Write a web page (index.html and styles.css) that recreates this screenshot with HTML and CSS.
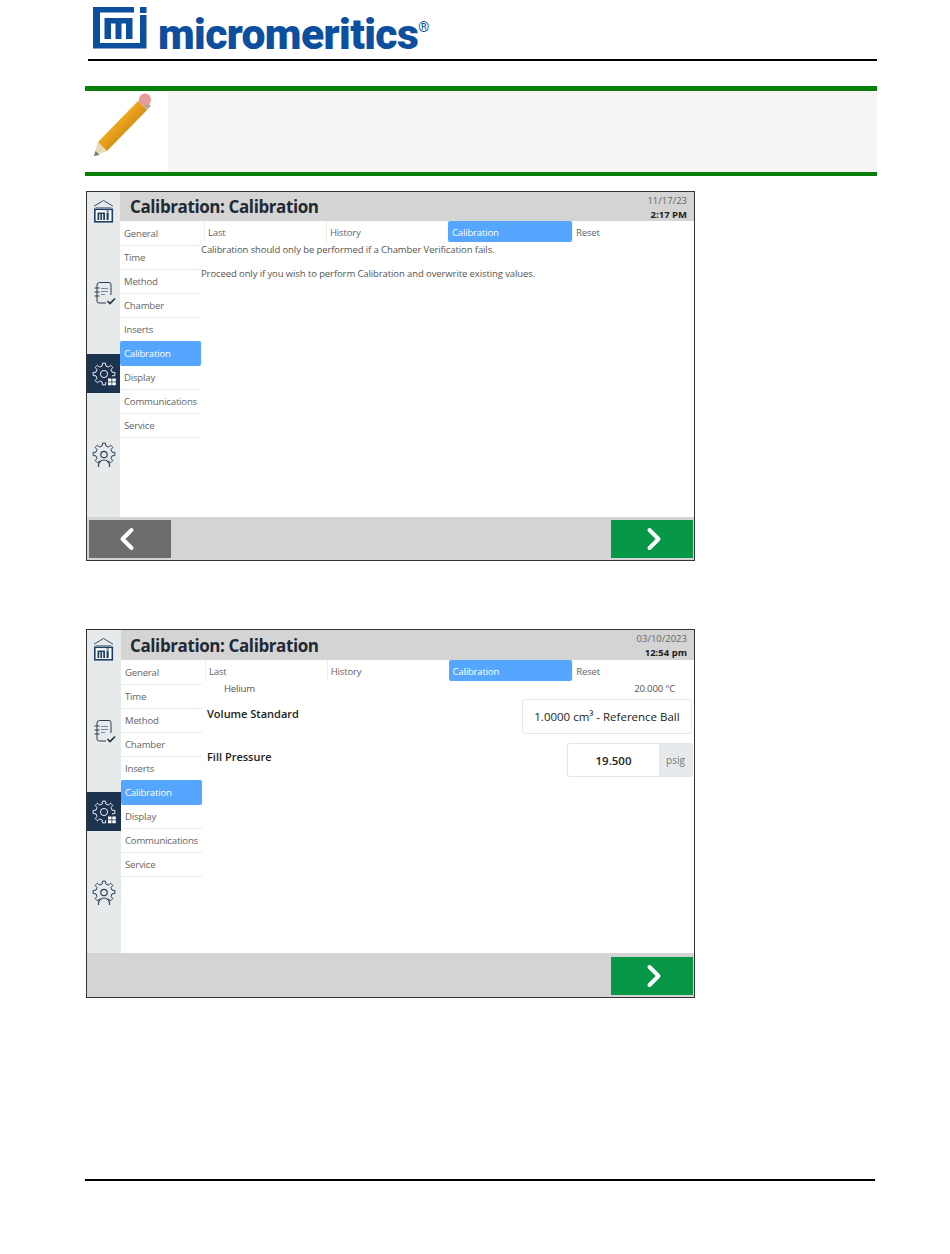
FILE: index.html
```html
<!DOCTYPE html>
<html>
<head>
    <meta charset="UTF-8">
    <title>Calibration</title>
    <link rel="stylesheet" href="styles.css">
</head>
<body>
    <svg class="defs">
        <symbol id="ico-home" viewBox="0 0 24 26">
            <path d="M2 7.200L11.500 1.500 21 7.200" fill="none" stroke="#3d4f62" stroke-width="1"/>
            <path d="M3.500 8.600h16" stroke="#7d8b99" stroke-width="1"/>
            <rect x="2.800" y="10.300" width="17.500" height="12.500" fill="#fff" stroke="#1d3f66" stroke-width="1.600"/>
            <path d="M5.500 21v-7.500h7.500V21h-1.800v-6h-1.100v6H8.400v-6H7.300v6zM14.500 21v-7.500h2.200V21z" fill="#1d3f66"/>
            <rect x="14.500" y="11.500" width="2.200" height="1.200" fill="#1d3f66"/>
        </symbol>
        <symbol id="ico-list" viewBox="0 0 24 26">
            <path d="M5 5a2.500 2.500 0 0 1 2.500-2.500H17a2 2 0 0 1 2 2V15M5 5v16a2 2 0 0 0 2 2h7" fill="none" stroke="#2b3f55" stroke-width="1"/>
            <path d="M2.500 8h5M2.500 12h5M2.500 16h5" stroke="#2b3f55" stroke-width="1.200"/>
            <path d="M9 8.500h7M9 11.500h7M9 14.500h4" stroke="#7d8b99" stroke-width="1"/>
            <path d="M15.500 21l2.500 2.500 5-5" fill="none" stroke="#22303e" stroke-width="1.600"/>
        </symbol>
        <symbol id="ico-gear-grid" viewBox="0 0 24 24">
            <path d="M13.850 19.990L13.530 22.890H10.470L10.150 19.990L7.660 18.960L5.380 20.780L3.220 18.620L5.040 16.340L4.010 13.850L1.110 13.530V10.470L4.010 10.150L5.040 7.660L3.220 5.380L5.380 3.220L7.660 5.040L10.150 4.010L10.470 1.110H13.530L13.850 4.010L16.340 5.040L18.620 3.220L20.780 5.380L18.960 7.660L19.990 10.150L22.890 10.470V13.530L19.990 13.850" fill="none" stroke="#fff" stroke-width="0.900" stroke-linejoin="round"/>
            <circle cx="12" cy="12" r="3.600" fill="none" stroke="#fff" stroke-width="0.900"/>
            <path d="M16 16.500h3.500v3h-3.500zM20.300 16.500h3.500v3h-3.500zM16 20.300h3.500v3h-3.500zM20.300 20.300h3.500v3h-3.500z" fill="#fff"/>
        </symbol>
        <symbol id="ico-gear-user" viewBox="0 0 24 26">
            <path d="M7.660 18.960L5.380 20.780L3.220 18.620L5.040 16.340L4.010 13.850L1.110 13.530V10.470L4.010 10.150L5.040 7.660L3.220 5.380L5.380 3.220L7.660 5.040L10.150 4.010L10.470 1.110H13.530L13.850 4.010L16.340 5.040L18.620 3.220L20.780 5.380L18.960 7.660L19.990 10.150L22.890 10.470V13.530L19.990 13.850L18.960 16.340L20.780 18.620L18.620 20.780L16.340 18.960" fill="none" stroke="#2b3f55" stroke-width="1" stroke-linejoin="round"/>
            <circle cx="12" cy="12.500" r="3.200" fill="none" stroke="#2b3f55" stroke-width="1.200"/>
            <path d="M6.500 25v-2a5.500 5 0 0 1 11 0v2" fill="none" stroke="#2b3f55" stroke-width="1.200"/>
        </symbol>
        <symbol id="ico-back" viewBox="0 0 16 24">
            <path d="M12.500 3L3.500 12l9 9" fill="none" stroke="#fff" stroke-width="4" stroke-linecap="round" stroke-linejoin="round"/>
        </symbol>
        <symbol id="ico-next" viewBox="0 0 16 24">
            <path d="M3.500 3l9 9-9 9" fill="none" stroke="#fff" stroke-width="4" stroke-linecap="round" stroke-linejoin="round"/>
        </symbol>
    </svg>

    <div class="pagehead">
        <svg class="logomark" viewBox="0 0 54 42">
            <path d="M0 0H41V5.500H7V36H47V8H53.500V41.500H0Z" fill="#0b4f9e"/>
            <path d="M11.500 11H39.500V32H33V16.500H28.500V32H22.500V16.500H18V32H11.500Z" fill="#0b4f9e"/>
            <rect x="47" y="0" width="6.500" height="6" fill="#0b4f9e"/>
        </svg>
        <div class="wordmark">micromeritics<sup class="reg">®</sup></div>
    </div>

    <div class="note">
        <div class="noteicon">
            <svg width="62" height="70" viewBox="0 0 62 70">
                <defs>
                    <linearGradient id="pencilbody" x1="0" y1="0" x2="1" y2="1">
                        <stop offset="0" stop-color="#f9d36c"/>
                        <stop offset="0.45" stop-color="#eba21c"/>
                        <stop offset="1" stop-color="#9a5f0c"/>
                    </linearGradient>
                </defs>
                <polygon points="2,65 6,51 15,60" fill="#e9d9b6"/>
                <polygon points="2,65 3.500,60 7.500,64" fill="#777"/>
                <polygon points="6,51 46,10 55,19 15,60" fill="url(#pencilbody)"/>
                <polygon points="46,10 50,6 59,15 55,19" fill="#b8ad8e"/>
                <circle cx="53" cy="8.500" r="6" fill="#e89a98"/>
            </svg>
        </div>
        <div class="notebody"></div>
    </div>

    <div class="screen first">
        <div class="rail">
            <div class="railitem"><svg class="railico"><use href="#ico-home"/></svg></div>
            <div class="railitem"><svg class="railico"><use href="#ico-list"/></svg></div>
            <div class="railitem active"><svg class="railico"><use href="#ico-gear-grid"/></svg></div>
            <div class="railitem"><svg class="railico"><use href="#ico-gear-user"/></svg></div>
        </div>
        <div class="main">
            <div class="titlebar">
                <div class="title">Calibration: Calibration</div>
                <div class="stamp"><div>11/17/23</div><b>2:17 PM</b></div>
            </div>
            <div class="work">
                <div class="menu">
                    <div class="menuitem">General</div>
                    <div class="menuitem">Time</div>
                    <div class="menuitem">Method</div>
                    <div class="menuitem">Chamber</div>
                    <div class="menuitem">Inserts</div>
                    <div class="menuitem sel">Calibration</div>
                    <div class="menuitem">Display</div>
                    <div class="menuitem">Communications</div>
                    <div class="menuitem">Service</div>
                </div>
                <div class="panel">
                    <div class="tabs">
                        <div class="tab">Last</div>
                        <div class="tab">History</div>
                        <div class="tab sel">Calibration</div>
                        <div class="tab">Reset</div>
                    </div>
                    <p class="msg">Calibration should only be performed if a Chamber Verification fails.</p>
                    <p class="msg">Proceed only if you wish to perform Calibration and overwrite existing values.</p>
                </div>
            </div>
        </div>
        <div class="navbtns">
            <div class="navbtn back"><svg class="chev"><use href="#ico-back"/></svg></div>
            <div class="navbtn next"><svg class="chev"><use href="#ico-next"/></svg></div>
        </div>
    </div>

    <div class="screen second">
        <div class="rail">
            <div class="railitem"><svg class="railico"><use href="#ico-home"/></svg></div>
            <div class="railitem"><svg class="railico"><use href="#ico-list"/></svg></div>
            <div class="railitem active"><svg class="railico"><use href="#ico-gear-grid"/></svg></div>
            <div class="railitem"><svg class="railico"><use href="#ico-gear-user"/></svg></div>
        </div>
        <div class="main">
            <div class="titlebar">
                <div class="title">Calibration: Calibration</div>
                <div class="stamp"><div>03/10/2023</div><b>12:54 pm</b></div>
            </div>
            <div class="work">
                <div class="menu">
                    <div class="menuitem">General</div>
                    <div class="menuitem">Time</div>
                    <div class="menuitem">Method</div>
                    <div class="menuitem">Chamber</div>
                    <div class="menuitem">Inserts</div>
                    <div class="menuitem sel">Calibration</div>
                    <div class="menuitem">Display</div>
                    <div class="menuitem">Communications</div>
                    <div class="menuitem">Service</div>
                </div>
                <div class="panel">
                    <div class="tabs">
                        <div class="tab">Last</div>
                        <div class="tab">History</div>
                        <div class="tab sel">Calibration</div>
                        <div class="tab">Reset</div>
                    </div>
                    <div class="gasrow"><span>Helium</span><span>20.000 °C</span></div>
                    <div class="field std">
                        <div class="fieldname">Volume Standard</div>
                        <div class="selectbox">1.0000 cm³ - Reference Ball</div>
                    </div>
                    <div class="field press">
                        <div class="fieldname">Fill Pressure</div>
                        <div class="inputbox"><div class="inputval">19.500</div><div class="inputunit">psig</div></div>
                    </div>
                </div>
            </div>
        </div>
        <div class="navbtns">
            <div class="navbtn next"><svg class="chev"><use href="#ico-next"/></svg></div>
        </div>
    </div>

    <div class="pagefoot"></div>
</body>
</html>
```

FILE: styles.css
```css
body {
    margin: 0;
    background-color: white;
    font-family: "Open Sans", "Noto Sans", sans-serif;
    color: #555;
}
.defs {
    display: none;
}

/* page header */
.pagehead {
    display: flex;
    margin-left: 88px;
    width: 789px;
    height: 61px;
    padding: 7px 0 0 5px;
    box-sizing: border-box;
    border-bottom: 2px solid black;
}
.logomark {
    width: 54px;
    height: 42px;
}
.wordmark {
    margin-left: 11px;
    font-family: Roboto, "Liberation Sans", sans-serif;
    font-weight: 900;
    font-size: 42.600px;
    line-height: 54px;
    letter-spacing: -0.6px;
    color: #0b4f9e;
    white-space: nowrap;
}
.reg {
    font-size: 14px;
    font-weight: 400;
    line-height: 0;
    letter-spacing: 0;
    vertical-align: 17px;
}

/* note box */
.note {
    display: flex;
    margin: 25px 0 0 85px;
    width: 792px;
    height: 90px;
    box-sizing: border-box;
    border-top: 5px solid #087f08;
    border-bottom: 4px solid #087f08;
}
.noteicon {
    width: 83px;
    padding: 0 0 0 7px;
    box-sizing: border-box;
}
.notebody {
    flex: 1;
    margin-top: 1px;
    background-color: #f5f5f6;
}

/* device screens */
.screen {
    display: flex;
    flex-wrap: wrap;
    margin-left: 86px;
    width: 609px;
    height: 370px;
    box-sizing: border-box;
    border: 1px solid #333;
}
.first {
    margin-top: 15px;
}
.second {
    margin-top: 68px;
    height: 369px;
}
.rail {
    display: flex;
    flex-direction: column;
    gap: 42px;
    width: 33px;
    height: 325px;
    background-color: #e6eaeb;
}
.second .rail {
    width: 34px;
    height: 323px;
}
.railitem {
    display: flex;
    align-items: center;
    justify-content: center;
    height: 39px;
}
.railitem.active {
    background-color: #1c3350;
}
.railico {
    width: 24px;
    height: 26px;
}
.main {
    display: flex;
    flex-direction: column;
    width: 574px;
    height: 325px;
}
.second .main {
    width: 573px;
    height: 323px;
}
.titlebar {
    display: flex;
    justify-content: space-between;
    height: 29px;
    background-color: #d4d4d4;
}
.second .titlebar {
    height: 30px;
}
.title {
    margin-left: 10px;
    padding-top: 2px;
    font-size: 17px;
    font-weight: 700;
    letter-spacing: -0.4px;
    color: #1f2a33;
    line-height: 25px;
}
.second .title {
    margin-left: 9px;
    padding-top: 3px;
}
.stamp {
    padding: 2px 7px 0 0;
    text-align: right;
    font-size: 9.500px;
    line-height: 14px;
    color: #666;
}
.stamp b {
    color: #222;
}
.work {
    display: flex;
    flex: 1;
}
.menu {
    width: 81px;
    padding-top: 1px;
}
.menuitem {
    height: 23px;
    padding-left: 4px;
    border-bottom: 1px solid #ececec;
    font-size: 9.600px;
    letter-spacing: -0.2px;
    line-height: 23px;
    color: #666;
}
.menuitem.sel {
    height: 25px;
    margin-top: -1px;
    border: 0;
    border-radius: 2px;
    background-color: #55a6ff;
    color: white;
    line-height: 25px;
}
.panel {
    flex: 1;
    min-width: 0;
}
.tabs {
    display: flex;
    height: 21px;
    margin: 0 0 1px 3px;
}
.tab {
    width: 122px;
    padding-left: 3px;
    box-sizing: border-box;
    border-left: 1px solid #eee;
    font-size: 9.600px;
    letter-spacing: -0.2px;
    line-height: 23px;
    color: #666;
}
.tab.sel {
    width: 124px;
    padding-left: 4px;
    border: 0;
    border-radius: 2px;
    background-color: #55a6ff;
    color: white;
}
.msg {
    margin: 0 0 10px 0;
    font-size: 9.500px;
    letter-spacing: -0.1px;
    line-height: 14px;
    color: #555;
}
.gasrow {
    display: flex;
    justify-content: space-between;
    padding: 0 19px 0 22px;
    font-size: 9.600px;
    letter-spacing: -0.2px;
    line-height: 14px;
}
.field {
    display: flex;
    justify-content: space-between;
    margin: 3px 1px 0 5px;
    font-size: 11.500px;
}
.press {
    margin-top: 9px;
}
.fieldname {
    font-size: 11px;
    font-weight: 600;
    color: #222;
    line-height: 15px;
    padding-top: 7px;
}
.press .fieldname {
    padding-top: 6px;
}
.selectbox {
    width: 170px;
    height: 35px;
    margin-right: 1px;
    box-sizing: border-box;
    border: 1px solid #e6e6e6;
    border-radius: 3px;
    text-align: center;
    line-height: 34px;
    color: #222;
}
.inputbox {
    display: flex;
    width: 126px;
    height: 34px;
    box-sizing: border-box;
    border: 1px solid #e6e6e6;
    border-radius: 3px;
}
.inputval {
    flex: 1;
    text-align: center;
    line-height: 33px;
    font-weight: 600;
    color: #222;
}
.inputunit {
    width: 33px;
    background-color: #e7eaed;
    text-align: center;
    font-size: 10px;
    line-height: 33px;
    color: #777;
}
.navbtns {
    display: flex;
    justify-content: space-between;
    width: 100%;
    height: 43px;
    padding: 3px 1px 0 2px;
    box-sizing: border-box;
    background-color: #d4d4d4;
}
.second .navbtns {
    justify-content: flex-end;
    height: 44px;
    padding-top: 4px;
}
.navbtn {
    display: flex;
    align-items: center;
    justify-content: center;
    width: 82px;
    height: 38px;
    box-sizing: border-box;
}
.back {
    padding-right: 6px;
    background-color: #6d6d6d;
}
.next {
    padding-left: 3px;
    background-color: #069747;
}
.chev {
    width: 16px;
    height: 24px;
}
.pagefoot {
    margin: 181px 0 0 85px;
    width: 790px;
    border-top: 2px solid black;
}
```
